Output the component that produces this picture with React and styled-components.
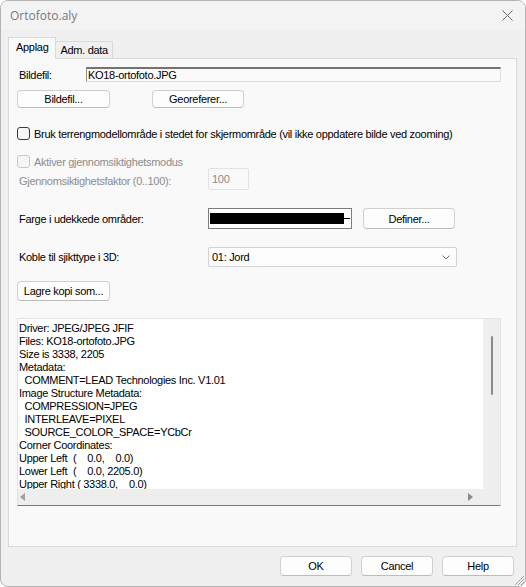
import React from 'react';
import styled, { createGlobalStyle } from 'styled-components';

const GlobalStyle = createGlobalStyle`
    html, body {
        margin: 0;
        padding: 0;
        background: #ffffff;
    }
    body {
        font-family: 'Liberation Sans', Arial, sans-serif;
        font-size: 11px;
        letter-spacing: -0.3px;
        color: #000;
    }
`;

const Window = styled.div`
    width: 526px;
    height: 587px;
    box-sizing: border-box;
    border: 1px solid #b4b4b4;
    border-radius: 8px;
    background: #f0f0f0;
    display: flex;
    flex-direction: column;
    overflow: hidden;
`;

const TitleBar = styled.div`
    height: 29px;
    display: flex;
    align-items: center;
    justify-content: space-between;
    padding: 0 12px 0 9px;
    background: #f3f3f3;
`;

const Title = styled.span`
    font-family: 'Open Sans', 'Noto Sans', sans-serif;
    font-size: 12px;
    letter-spacing: 0;
    color: #7a7a7a;
`;

const Body = styled.div`
    flex: 1;
    display: flex;
    flex-direction: column;
    padding: 7px 8px 0 7px;
`;

const Tabs = styled.div`
    display: flex;
    align-items: flex-end;
    height: 22px;
    margin-bottom: -1px;
    position: relative;
    z-index: 1;
`;

const Tab = styled.div`
    box-sizing: border-box;
    height: ${(p) => (p.active ? '22px' : '18px')};
    padding: ${(p) => (p.active ? '0 7px 3px' : '0 4px')};
    margin-left: ${(p) => (p.active ? '0' : '-1px')};
    display: flex;
    align-items: center;
    border: 1px solid #d9d9d9;
    border-bottom: ${(p) => (p.active ? 'none' : '1px solid #d9d9d9')};
    background: ${(p) => (p.active ? '#f9f9f9' : '#f0f0f0')};
`;

const Panel = styled.div`
    flex: 1;
    box-sizing: border-box;
    border: 1px solid #d9d9d9;
    background: #f9f9f9;
    padding: 8px 15px 0 8px;
    display: flex;
    flex-direction: column;
`;

const Row = styled.div`
    display: flex;
    align-items: center;
    height: ${(p) => p.h}px;
    margin-top: ${(p) => p.mt || 0}px;
    gap: ${(p) => p.gap || 0}px;
`;

const Label = styled.span`
    width: ${(p) => p.w}px;
    flex-shrink: 0;
    padding-left: 2px;
    box-sizing: border-box;
    color: ${(p) => (p.disabled ? '#8c8c8c' : '#000')};
    padding-top: ${(p) => p.dy || 0}px;
`;

const Edit = styled.div`
    flex: 1;
    height: 15px;
    box-sizing: border-box;
    background: #fafafa;
    border: 1px solid #dcdcdc;
    border-top: 2px solid #737373;
    border-left: 1px solid #8f8f8f;
    display: flex;
    align-items: center;
    padding-left: 1px;
`;

const Button = styled.div`
    width: ${(p) => p.w || 93}px;
    height: ${(p) => p.h || 20}px;
    margin-left: ${(p) => p.ml || 0}px;
    box-sizing: border-box;
    border: 1px solid #d0d0d0;
    border-bottom-color: #bcbcbc;
    border-radius: 4px;
    background: #fdfdfd;
    display: flex;
    align-items: center;
    justify-content: center;
`;

const Check = styled.span`
    width: 13px;
    height: 13px;
    box-sizing: border-box;
    border: 1px solid ${(p) => (p.disabled ? '#c8c8c8' : '#3b3b3b')};
    border-radius: 3px;
    background: ${(p) => (p.disabled ? '#f5f5f5' : '#f7f7f7')};
    margin-right: 4px;
`;

const CheckText = styled.span`
    color: ${(p) => (p.disabled ? '#8c8c8c' : '#000')};
`;

const NumberBox = styled.div`
    width: 41px;
    height: 22px;
    box-sizing: border-box;
    border: 1px solid #e2e2e2;
    border-radius: 2px;
    background: #f9f9f9;
    color: #8c8c8c;
    padding: 4px 0 0 3px;
`;

const ColorBox = styled.div`
    width: 144px;
    height: 21px;
    box-sizing: border-box;
    border: 1px solid #7c7c7c;
    background: #fff;
    display: flex;
    align-items: center;
    padding: 0 1px;
`;

const Swatch = styled.div`
    width: 134px;
    height: 11px;
    background: #000;
`;

const SwatchLine = styled.div`
    width: 6px;
    height: 1px;
    background: #000;
`;

const Select = styled.div`
    width: 249px;
    height: 20px;
    box-sizing: border-box;
    border: 1px solid #d2d2d2;
    border-radius: 2px;
    background: #fdfdfd;
    display: flex;
    align-items: center;
    justify-content: space-between;
    padding: 0 6px 0 3px;
`;

const InfoBox = styled.div`
    width: 484px;
    height: 188px;
    margin-top: 17px;
    box-sizing: border-box;
    border: 1px solid #e3e3e3;
    border-bottom: 1px solid #7a7a7a;
    display: grid;
    grid-template-columns: 1fr 17px;
    grid-template-rows: 1fr 16px;
    background: #fff;
`;

const InfoText = styled.pre`
    margin: 0;
    padding: 3px 0 0 1px;
    overflow: hidden;
    font-family: 'Liberation Sans', Arial, sans-serif;
    font-size: 11px;
    letter-spacing: -0.3px;
    line-height: 13px;
`;

const VScroll = styled.div`
    background: #eeeeee;
    display: flex;
    justify-content: center;
    padding-top: 17px;
    padding-left: 1px;
`;

const VThumb = styled.div`
    width: 2px;
    height: 59px;
    border-radius: 1px;
    background: #8a8a8a;
`;

const HScroll = styled.div`
    background: #eeeeee;
    display: flex;
    align-items: center;
    justify-content: space-between;
    padding: 0 10px 0 2px;
`;

const Corner = styled.div`
    background: #eeeeee;
`;

const Footer = styled.div`
    display: flex;
    justify-content: flex-end;
    gap: 9px;
    padding: 9px 3px 10px 0;
`;

const Grip = styled.svg`
    position: absolute;
    right: 1px;
    bottom: 1px;
`;

const Frame = styled.div`
    position: relative;
    width: 526px;
    height: 587px;
`;

const info = `Driver: JPEG/JPEG JFIF
Files: KO18-ortofoto.JPG
Size is 3338, 2205
Metadata:
  COMMENT=LEAD Technologies Inc. V1.01
Image Structure Metadata:
  COMPRESSION=JPEG
  INTERLEAVE=PIXEL
  SOURCE_COLOR_SPACE=YCbCr
Corner Coordinates:
Upper Left  (    0.0,    0.0)
Lower Left  (    0.0, 2205.0)
Upper Right ( 3338.0,    0.0)`;

function App() {
    return (
        <Frame>
            <GlobalStyle />
            <Window>
                <TitleBar>
                    <Title>Ortofoto.aly</Title>
                    <svg width="11" height="11" viewBox="0 0 11 11">
                        <path d="M0.5 0.5 L10.5 10.5 M10.5 0.5 L0.5 10.5" stroke="#6a6a6a" strokeWidth="1" fill="none" />
                    </svg>
                </TitleBar>
                <Body>
                    <Tabs>
                        <Tab active>Applag</Tab>
                        <Tab>Adm. data</Tab>
                    </Tabs>
                    <Panel>
                        <Row h={15}>
                            <Label w={69}>Bildefil:</Label>
                            <Edit>KO18-ortofoto.JPG</Edit>
                        </Row>
                        <Row h={18} mt={8} gap={42}>
                            <Button h={18}>Bildefil...</Button>
                            <Button h={18} w={92}>Georeferer...</Button>
                        </Row>
                        <Row h={13} mt={19}>
                            <Check />
                            <CheckText>Bruk terrengmodellområde i stedet for skjermområde (vil ikke oppdatere bilde ved zooming)</CheckText>
                        </Row>
                        <Row h={13} mt={15}>
                            <Check disabled />
                            <CheckText disabled>Aktiver gjennomsiktighetsmodus</CheckText>
                        </Row>
                        <Row h={22}>
                            <Label w={191} disabled dy={3}>Gjennomsiktighetsfaktor (0..100):</Label>
                            <NumberBox>100</NumberBox>
                        </Row>
                        <Row h={21} mt={18}>
                            <Label w={191}>Farge i udekkede områder:</Label>
                            <ColorBox>
                                <Swatch />
                                <SwatchLine />
                            </ColorBox>
                            <Button h={21} w={92} ml={11}>Definer...</Button>
                        </Row>
                        <Row h={20} mt={18}>
                            <Label w={191}>Koble til sjikttype i 3D:</Label>
                            <Select>
                                <span>01: Jord</span>
                                <svg width="8" height="5" viewBox="0 0 8 5">
                                    <path d="M0.5 0.5 L4 4 L7.5 0.5" stroke="#6e6e6e" strokeWidth="1" fill="none" />
                                </svg>
                            </Select>
                        </Row>
                        <Row h={20} mt={14}>
                            <Button>Lagre kopi som...</Button>
                        </Row>
                        <InfoBox>
                            <InfoText>{info}</InfoText>
                            <VScroll>
                                <VThumb />
                            </VScroll>
                            <HScroll>
                                <svg width="5" height="8" viewBox="0 0 5 8">
                                    <path d="M5 0 L0 4 L5 8 Z" fill="#a0a0a0" />
                                </svg>
                                <svg width="5" height="8" viewBox="0 0 5 8">
                                    <path d="M0 0 L5 4 L0 8 Z" fill="#8a8a8a" />
                                </svg>
                            </HScroll>
                            <Corner />
                        </InfoBox>
                    </Panel>
                    <Footer>
                        <Button w={72}>OK</Button>
                        <Button w={72}>Cancel</Button>
                        <Button w={72}>Help</Button>
                    </Footer>
                </Body>
            </Window>
            <Grip width="10" height="10" viewBox="0 0 10 10">
                <path d="M9 3 L3 9 M9 6 L6 9 M9 0 L0 9" stroke="#a8a8a8" strokeWidth="1" fill="none" />
            </Grip>
        </Frame>
    );
}

export default App;
